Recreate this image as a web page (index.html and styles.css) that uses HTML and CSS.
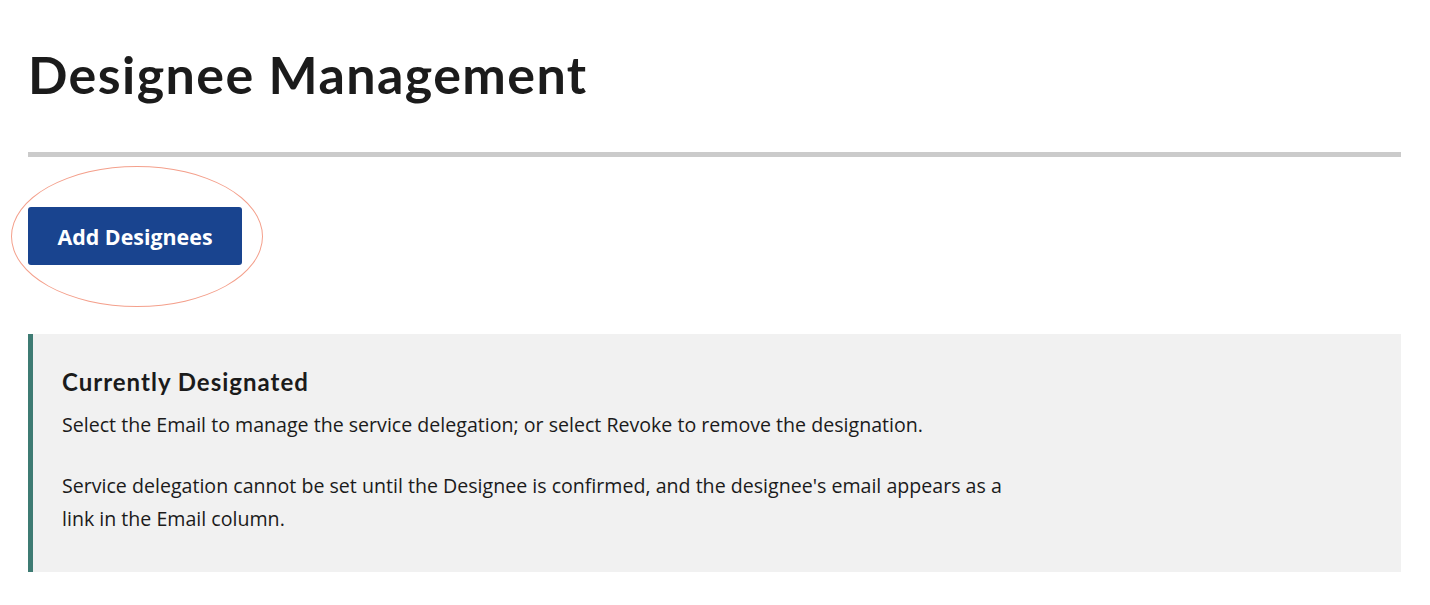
FILE: index.html
```html
<!DOCTYPE html>
<html lang="en">
<head>
  <meta charset="UTF-8">
  <meta name="viewport" content="width=device-width, initial-scale=1.0">
  <title>Designee Management</title>
  <link rel="stylesheet" href="styles.css">
</head>
<body>
  <main class="page">
    <h1 class="page-title">Designee Management</h1>
    <hr class="divider">

    <div class="actions">
      <button class="btn-primary" type="button">Add Designees</button>
      <!-- highlight ring drawn over the button -->
      <span class="callout-ring"></span>
    </div>

    <section class="notice">
      <h2>Currently Designated</h2>
      <p>Select the Email to manage the service delegation; or select Revoke to remove the designation.</p>
      <p>Service delegation cannot be set until the Designee is confirmed, and the designee's email appears as a link in the Email column.</p>
    </section>
  </main>
</body>
</html>
```

FILE: styles.css
```css
body {
  margin: 0;
  background: #fff;
  color: #1b1b1b;
  font-family: "Open Sans", "Liberation Sans", sans-serif;
}
.page {
  padding: 0 29px 0 28px;
}
.page-title {
  font-family: Lato, "Open Sans", sans-serif;
  font-weight: 700;
  font-size: 52px;
  letter-spacing: 1.4px;
  line-height: 60px;
  margin: 0;
  padding-top: 44px;
}
.divider {
  border: none;
  height: 5px;
  background-color: #cbcbcb;
  margin: 48px 0 0;
}
.actions {
  position: relative;
  padding: 50px 0 69px;
}
.btn-primary {
  display: block;
  background-color: #19448f;
  color: #fff;
  font-family: "Open Sans", sans-serif;
  font-weight: 700;
  font-size: 21.4px;
  width: 214px;
  height: 58px;
  border: none;
  border-radius: 3px;
  cursor: pointer;
}
.callout-ring {
  position: absolute;
  left: -17px;
  top: 9px;
  width: 250px;
  height: 139px;
  border: 1.5px solid #f4a08c;
  border-radius: 50%;
  pointer-events: none;
}
.notice {
  background-color: #f1f1f1;
  border-left: 5px solid #3e7b73;
  padding: 33px 30px 37px 29px;
}
.notice h2 {
  font-family: Lato, "Open Sans", sans-serif;
  font-size: 24px;
  letter-spacing: 1px;
  font-weight: 700;
  margin: 0 0 12px;
}
.notice p {
  font-size: 19.6px;
  line-height: 33px;
  margin: 0 0 28px;
  max-width: 950px;
}
.notice p:last-child {
  margin-bottom: 0;
}
```
